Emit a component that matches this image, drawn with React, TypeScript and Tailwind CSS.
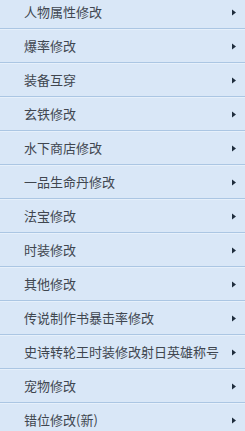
const items = [
  '人物属性修改',
  '爆率修改',
  '装备互穿',
  '玄铁修改',
  '水下商店修改',
  '一品生命丹修改',
  '法宝修改',
  '时装修改',
  '其他修改',
  '传说制作书暴击率修改',
  '史诗转轮王时装修改射日英雄称号',
  '宠物修改',
  '错位修改(新)',
]

export default function App() {
  return (
    <div
      className="h-[431px] w-[245px] overflow-hidden bg-[#d9e7f7]"
      style={{ fontFamily: '"Noto Sans CJK SC", "Liberation Sans", sans-serif' }}
    >
      <ul className="-mt-[5px]">
        {items.map(label => (
          <li
            key={label}
            className="flex h-[34px] items-center justify-between border-t border-b border-t-[#e6f0fb] border-b-[#abc6e3] bg-[#d9e7f7] pl-6 pr-[9px] text-[13px] text-[#40464f]"
          >
            <span className="truncate">{label}</span>
            <svg width="4" height="7" viewBox="0 0 4 7" className="shrink-0">
              <path d="M0 0.5 L4 3.5 L0 6.5 Z" fill="#1f2d3d" />
            </svg>
          </li>
        ))}
      </ul>
    </div>
  )
}
